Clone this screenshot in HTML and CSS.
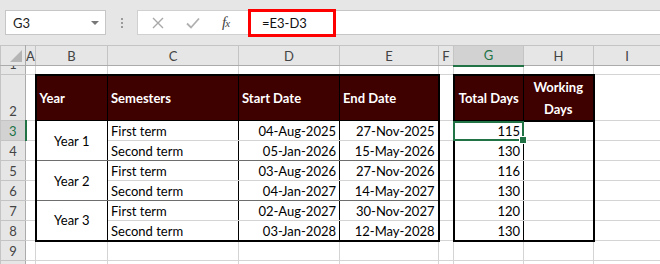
FILE: index.html
```html
<!DOCTYPE html>
<html>

<head>
	<meta charset="UTF-8">
	<title>Semesters</title>
	<link rel="stylesheet" href="styles.css">
</head>

<body>
	<div class="toolbar">
		<div class="namebox">
			<span>G3</span>
			<span class="caret"></span>
		</div>
		<div class="grip"><i></i><i></i><i></i></div>
		<div class="fxbtns">
			<svg class="btn" width="12" height="12" viewBox="0 0 12 12">
				<path d="M1 1 L11 11 M11 1 L1 11" stroke="#a8a8a8" stroke-width="1.4" fill="none" />
			</svg>
			<svg class="btn" width="14" height="12" viewBox="0 0 14 12">
				<path d="M1 6.5 L5 10.5 L13 1.5" stroke="#b0b0b0" stroke-width="1.8" fill="none" />
			</svg>
			<span class="fx">f<small>x</small></span>
		</div>
		<div class="formula">
			<div class="hit">=E3-D3</div>
		</div>
	</div>

	<table class="sheet">
		<colgroup>
			<col style="width:25px">
			<col style="width:10px">
			<col style="width:72px">
			<col style="width:131px">
			<col style="width:101px">
			<col style="width:99px">
			<col style="width:15px">
			<col style="width:70px">
			<col style="width:70px">
			<col style="width:67px">
		</colgroup>
		<tr class="r-hd">
			<th class="corner"><span class="tri"></span></th>
			<th class="ch">A</th>
			<th class="ch">B</th>
			<th class="ch">C</th>
			<th class="ch">D</th>
			<th class="ch">E</th>
			<th class="ch">F</th>
			<th class="ch sel">G</th>
			<th class="ch">H</th>
			<th class="ch">I</th>
		</tr>
		<tr class="r1">
			<th class="rh"><div class="clip"><span>1</span></div></th>
			<td></td><td></td><td></td><td></td><td></td><td></td><td></td><td></td><td></td>
		</tr>
		<tr class="r2">
			<th class="rh">2</th>
			<td></td>
			<td class="hd edge-l">Year</td>
			<td class="hd">Semesters</td>
			<td class="hd">Start Date</td>
			<td class="hd edge-r">End Date</td>
			<td></td>
			<td class="hd edge-l hd2 ctr">Total Days</td>
			<td class="hd edge-r hd2 ctr">Working<br>Days</td>
			<td></td>
		</tr>
		<tr>
			<th class="rh sel">3</th>
			<td></td>
			<td class="yr edge-l" rowspan="2">Year 1</td>
			<td class="v">First term</td>
			<td class="v num">04-Aug-2025</td>
			<td class="num edge-r">27-Nov-2025</td>
			<td></td>
			<td class="num edge-l v active">115</td>
			<td class="edge-r"></td>
			<td></td>
		</tr>
		<tr>
			<th class="rh">4</th>
			<td></td>
			<td class="v sep">Second term</td>
			<td class="v num sep">05-Jan-2026</td>
			<td class="num edge-r sep">15-May-2026</td>
			<td></td>
			<td class="num edge-l v">130</td>
			<td class="edge-r"></td>
			<td></td>
		</tr>
		<tr>
			<th class="rh">5</th>
			<td></td>
			<td class="yr edge-l" rowspan="2">Year 2</td>
			<td class="v">First term</td>
			<td class="v num">03-Aug-2026</td>
			<td class="num edge-r">27-Nov-2026</td>
			<td></td>
			<td class="num edge-l v">116</td>
			<td class="edge-r"></td>
			<td></td>
		</tr>
		<tr>
			<th class="rh">6</th>
			<td></td>
			<td class="v sep">Second term</td>
			<td class="v num sep">04-Jan-2027</td>
			<td class="num edge-r sep">14-May-2027</td>
			<td></td>
			<td class="num edge-l v">130</td>
			<td class="edge-r"></td>
			<td></td>
		</tr>
		<tr>
			<th class="rh">7</th>
			<td></td>
			<td class="yr edge-l edge-b" rowspan="2">Year 3</td>
			<td class="v">First term</td>
			<td class="v num">02-Aug-2027</td>
			<td class="num edge-r">30-Nov-2027</td>
			<td></td>
			<td class="num edge-l v">120</td>
			<td class="edge-r"></td>
			<td></td>
		</tr>
		<tr>
			<th class="rh">8</th>
			<td></td>
			<td class="v edge-b">Second term</td>
			<td class="v num edge-b">03-Jan-2028</td>
			<td class="num edge-r edge-b">12-May-2028</td>
			<td></td>
			<td class="num edge-l v edge-b">130</td>
			<td class="edge-r edge-b"></td>
			<td></td>
		</tr>
		<tr>
			<th class="rh">9</th>
			<td></td><td></td><td></td><td></td><td></td><td></td><td></td><td></td><td></td>
		</tr>
		<tr>
			<th class="rh"></th>
			<td></td><td></td><td></td><td></td><td></td><td></td><td></td><td></td><td></td>
		</tr>
	</table>
</body>

</html>
```

FILE: styles.css
```css
body,
html {
	margin: 0;
	padding: 0;
	overflow: hidden;
	background: #FFFFFF;
	font-family: 'Lato', sans-serif;
	font-size: 13px;
	color: #000000;
}

* {
	box-sizing: border-box;
}

/* formula bar */

.toolbar {
	height: 45px;
	background: #e6e6e6;
	display: flex;
	align-items: center;
	padding-left: 5px;
}

.namebox {
	width: 101px;
	height: 25px;
	background: #FFFFFF;
	border: 1px solid #c6c6c6;
	display: flex;
	align-items: center;
	justify-content: space-between;
	padding: 0 6px 0 7px;
	color: #222222;
}

.namebox .caret {
	width: 0;
	height: 0;
	border-left: 4px solid transparent;
	border-right: 4px solid transparent;
	border-top: 4px solid #777777;
}

.grip {
	width: 31px;
	display: flex;
	flex-direction: column;
	align-items: center;
	gap: 2px;
}

.grip i {
	display: block;
	width: 2px;
	height: 2px;
	background: #9a9a9a;
}

.fxbtns {
	width: 111px;
	height: 25px;
	background: #FFFFFF;
	border: 1px solid #d0d0d0;
	border-right: 0 none;
	display: flex;
	align-items: center;
	padding-left: 14px;
}

.fxbtns .btn {
	margin-right: 22px;
}

.fx {
	font-family: 'Liberation Serif', serif;
	font-style: italic;
	font-size: 15px;
	color: #444444;
	letter-spacing: -1px;
}

.fx small {
	font-size: 11px;
}

.formula {
	flex: 1;
	height: 25px;
	background: #FFFFFF;
	border-top: 1px solid #c6c6c6;
	border-bottom: 1px solid #c6c6c6;
	display: flex;
	align-items: center;
}

.hit {
	width: 88px;
	height: 28px;
	flex: none;
	border: 3px solid #ff0000;
	display: flex;
	align-items: center;
	padding-left: 11px;
	color: #111111;
}

/* sheet */

.sheet {
	border-collapse: collapse;
	table-layout: fixed;
	width: 660px;
}

.sheet td,
.sheet th {
	padding: 0 3px;
	border: 1px solid #d4d4d4;
	white-space: nowrap;
	overflow: hidden;
	vertical-align: bottom;
	line-height: 18px;
}

.sheet th {
	background: #e6e6e6;
	font-weight: normal;
	color: #444444;
	border-color: #c4c4c4;
}

.sheet tr {
	height: 20px;
}

.sheet tr.r1 {
	height: 9px;
}

.sheet tr.r2 {
	height: 46px;
}

.sheet .ch {
	padding: 0;
	text-align: center;
	vertical-align: middle;
	border-bottom-color: #ababab;
}

.sheet .corner {
	position: relative;
	border-right-color: #ababab;
	border-bottom-color: #ababab;
}

.corner .tri {
	position: absolute;
	right: 3px;
	bottom: 3px;
	width: 0;
	height: 0;
	border-left: 12px solid transparent;
	border-bottom: 12px solid #b5b5b5;
}

.sheet .rh {
	text-align: center;
	border-right-color: #ababab;
	padding: 0;
}

.rh .clip {
	height: 8px;
	overflow: hidden;
	display: flex;
	align-items: flex-end;
	justify-content: center;
}

.rh .clip span {
	flex: none;
	line-height: 20px;
}

.sheet .ch.sel {
	background: #d2d2d2;
	color: #217346;
	border-bottom: 2px solid #217346;
}

.sheet .rh.sel {
	background: #d2d2d2;
	color: #217346;
	border-right: 2px solid #217346;
}

/* data tables */

.sheet .hd {
	background: #3f0000;
	color: #FFFFFF;
	font-weight: bold;
	vertical-align: middle;
	border: 1px solid #000000;
	border-top-width: 2px;
}

.sheet .hd2 {
	border-bottom-width: 2px;
	line-height: 22px;
}

.sheet .ctr {
	text-align: center;
}

.sheet .edge-l {
	border-left: 2px solid #000000;
}

.sheet .edge-r {
	border-right: 2px solid #000000;
}

.sheet .edge-b {
	border-bottom: 2px solid #000000;
}

.sheet .v {
	border-right: 1px solid #000000;
}

.sheet .yr {
	text-align: center;
	vertical-align: middle;
	border-right: 1px solid #000000;
	border-bottom: 1px solid #6e6e6e;
}

.sheet .yr.edge-b {
	border-bottom: 2px solid #000000;
}

.sheet .sep {
	border-bottom: 1px solid #6e6e6e;
}

.sheet .num {
	text-align: right;
}

.sheet .active {
	position: relative;
	overflow: visible;
}

.sheet .active::after {
	content: "";
	position: absolute;
	top: -1px;
	left: -2px;
	right: -1px;
	bottom: -1px;
	border: 2px solid #217346;
	z-index: 2;
}

.sheet .active::before {
	content: "";
	position: absolute;
	right: -4px;
	bottom: -4px;
	width: 6px;
	height: 6px;
	background: #217346;
	border: 1px solid #FFFFFF;
	z-index: 3;
}
```
